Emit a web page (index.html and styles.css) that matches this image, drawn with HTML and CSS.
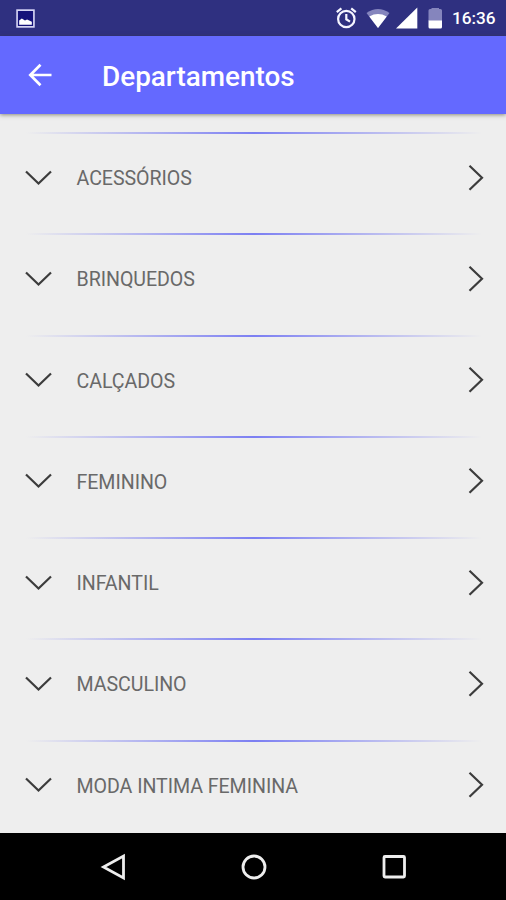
FILE: index.html
```html
<!DOCTYPE html>
<html lang="pt-BR">
<head>
<meta charset="utf-8">
<title>Departamentos</title>
<link rel="stylesheet" href="styles.css">
</head>
<body>
<svg class="symbols" aria-hidden="true">
  <symbol id="down" viewBox="0 0 28 28"><path d="M2 7.500 14.500 19.500 27 7.500"/></symbol>
  <symbol id="right" viewBox="0 0 16 28"><path d="M1.500 1.800 14 13.800 1.500 25.800"/></symbol>
</svg>
<div class="status">
  <svg class="status-photo" viewBox="0 0 18 18"><path d="M1 1h16v16H1z" fill="none" stroke="#d5d5f2" stroke-width="1.6"/><path d="M3 15v-4l2.500-2 3 2 2-1 4.500 2v3z" fill="#fff"/></svg>
  <svg class="status-icons" viewBox="0 0 108 24">
    <g fill="none" stroke="#f5f5ff" stroke-width="2.200"><circle cx="11.300" cy="13" r="8.200"/><path d="M11.300 8v5.300l3.700 2.300M1.800 6.200 6.400 2.300M16.200 2.300l4.600 3.900"/></g>
    <path d="M31.500 7Q43 -1 54.500 7L43 22z" fill="#8585bd"/><path d="M34.300 10.400Q43 5.800 51.700 10.400L43 22z" fill="#fff"/>
    <path d="M61 22.500 82.300 1.500V22.500z" fill="#fff"/>
    <path d="M93.500 4.500q0-1.500 1.500-1.500H96.500V2h7.500v1h1.500q1.500 0 1.500 1.500V15H93.500z" fill="#8585bd"/><path d="M93.500 14.500h13.500v6.500q0 1.500-1.500 1.500H95q-1.500 0-1.500-1.500z" fill="#fff"/>
  </svg>
  <span class="time">16:36</span>
</div>
<header class="appbar">
  <svg class="back" viewBox="0 0 24 24"><path d="M23.500 12H2.500M12.500 1.800 2.300 12l10.200 10.200"/></svg>
  <h1>Departamentos</h1>
</header>
<main class="list">
  <div class="row"><svg class="down"><use href="#down"/></svg><span>ACESSÓRIOS</span><svg class="right"><use href="#right"/></svg></div>
  <div class="row"><svg class="down"><use href="#down"/></svg><span>BRINQUEDOS</span><svg class="right"><use href="#right"/></svg></div>
  <div class="row"><svg class="down"><use href="#down"/></svg><span>CALÇADOS</span><svg class="right"><use href="#right"/></svg></div>
  <div class="row"><svg class="down"><use href="#down"/></svg><span>FEMININO</span><svg class="right"><use href="#right"/></svg></div>
  <div class="row"><svg class="down"><use href="#down"/></svg><span>INFANTIL</span><svg class="right"><use href="#right"/></svg></div>
  <div class="row"><svg class="down"><use href="#down"/></svg><span>MASCULINO</span><svg class="right"><use href="#right"/></svg></div>
  <div class="row"><svg class="down"><use href="#down"/></svg><span>MODA INTIMA FEMININA</span><svg class="right"><use href="#right"/></svg></div>
</main>
<nav class="navbar">
  <svg viewBox="0 0 28 28"><path d="M24.500 3v22L4.500 14z"/></svg>
  <svg viewBox="0 0 28 28"><circle cx="14" cy="14" r="11"/></svg>
  <svg viewBox="0 0 28 28"><rect x="4" y="3.500" width="20.500" height="20.500" rx="1"/></svg>
</nav>
</body>
</html>
```
FILE: styles.css
```css
* { box-sizing: border-box; }
body {
  margin: 0;
  height: 900px;
  overflow: hidden;
  display: flex;
  flex-direction: column;
  background: #eee;
  font-family: Roboto, sans-serif;
}
svg { display: block; flex: none; }
.symbols { position: absolute; width: 0; height: 0; }
.status {
  flex: none;
  height: 36px;
  padding: 0 11px 0 16px;
  display: flex;
  align-items: center;
  background: #2f3080;
  color: #fff;
}
.status-photo { width: 19px; height: 19px; background: #15127a; }
.status-icons { width: 108px; height: 24px; margin-left: auto; }
.time {
  width: 43px;
  margin-left: 9px;
  font-size: 17.2px;
  font-weight: 500;
  line-height: 36px;
  white-space: nowrap;
}
.appbar {
  flex: none;
  height: 78px;
  padding-left: 28px;
  display: flex;
  align-items: center;
  background: #6469ff;
  color: #fff;
  box-shadow: 0 1px 4px rgba(60, 60, 30, .55);
}
.back { width: 24px; height: 24px; fill: none; stroke: #fff; stroke-width: 2.7; }
h1 {
  margin: 3px 0 0 50px;
  font-size: 27.9px;
  font-weight: 500;
  line-height: 32px;
}
.list {
  flex: 1;
  min-height: 0;
  overflow: hidden;
  padding-top: 18px;
}
.row {
  height: 101.25px;
  padding: 0 22px 10px 24px;
  display: flex;
  align-items: center;
  background: linear-gradient(90deg, transparent, #7c7ff2 50%, transparent) 26px 0 / 456px 2px no-repeat;
  color: #696969;
  font-size: 19.6px;
  font-weight: 400;
  letter-spacing: -0.05px;
}
.row span { margin: 3px 0 0 24.5px; line-height: 24px; }
.down { width: 28px; height: 28px; }
.right { width: 16px; height: 28px; margin-left: auto; }
.row svg { fill: none; stroke: #3c3c3c; stroke-width: 2.2; }
.navbar {
  flex: none;
  height: 67px;
  padding: 0 98px 0 99px;
  display: flex;
  align-items: center;
  justify-content: space-between;
  background: #000;
}
.navbar svg { width: 28px; height: 28px; fill: none; stroke: #eee; stroke-width: 2.8; }
```
